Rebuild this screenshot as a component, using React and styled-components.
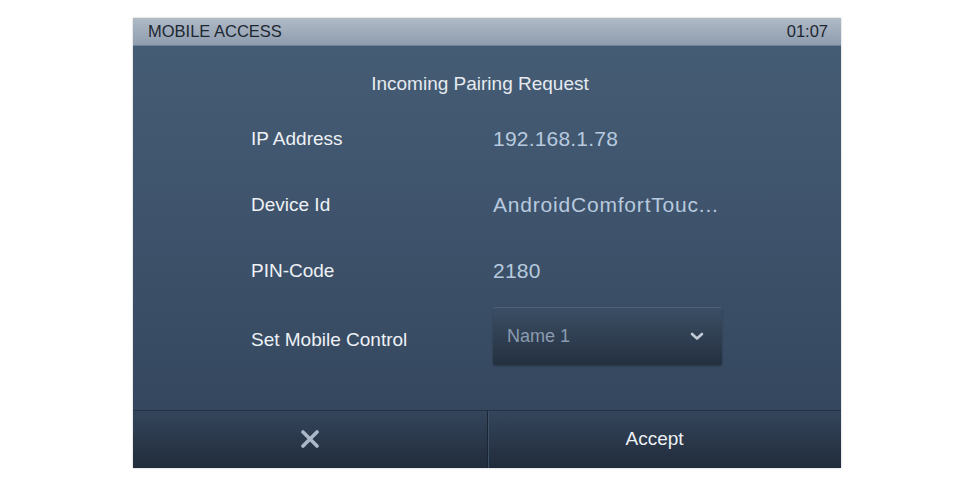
import styled, { createGlobalStyle } from "styled-components";

const GlobalStyle = createGlobalStyle`
  html, body {
    margin: 0;
    padding: 0;
    background: #ffffff;
  }
  body {
    font-family: "Liberation Sans", Arial, sans-serif;
  }
`;

const Page = styled.div`
  width: 974px;
  height: 487px;
  padding: 18px 0 0 133px;
  box-sizing: border-box;
`;

const Panel = styled.div`
  width: 708px;
  height: 450px;
  display: flex;
  flex-direction: column;
  box-shadow: 0 0 2px rgba(0, 0, 0, 0.25);
`;

// Header bar with title and clock
const Header = styled.div`
  height: 27px;
  display: flex;
  align-items: center;
  justify-content: space-between;
  padding: 0 13px 0 15px;
  background: linear-gradient(#b0bac7, #8f9daf);
  color: #1d2731;
  font-size: 16.5px;
  border-bottom: 1px solid #6f8097;
`;

const Body = styled.div`
  flex: 1;
  display: flex;
  flex-direction: column;
  background: linear-gradient(#455c75 0%, #3e536b 50%, #34475e 100%);
`;

const Title = styled.div`
  padding: 27px 14px 0 0;
  line-height: 22px;
  text-align: center;
  color: #e6eaef;
  font-size: 19px;
`;

const Fields = styled.div`
  display: grid;
  grid-template-columns: 242px 1fr;
  grid-auto-rows: 66px;
  padding: 11px 0 0 118px;
`;

const Label = styled.div`
  display: flex;
  align-items: center;
  color: #eef1f5;
  font-size: 19px;
  padding-top: ${(p) => p.$shift || 0}px;
`;

const Value = styled.div`
  display: flex;
  align-items: center;
  color: #b7cadf;
  font-size: 21px;
  letter-spacing: ${(p) => (p.$wide ? "0.8px" : "0.2px")};
`;

const Select = styled.div`
  width: 229px;
  height: 58px;
  box-sizing: border-box;
  display: flex;
  align-items: center;
  justify-content: space-between;
  padding: 0 18px 0 14px;
  margin-top: -2px;
  background: linear-gradient(#3b4e64, #243040);
  border-top: 1px solid #4e6078;
  border-radius: 2px;
  box-shadow: 0 1px 2px rgba(0, 0, 0, 0.3);
  color: #8b9bb0;
  font-size: 18px;
  letter-spacing: 0;
`;

const Footer = styled.div`
  height: 58px;
  display: grid;
  grid-template-columns: 354px 1fr;
  background: linear-gradient(#34455b, #212c3b);
  border-top: 1px solid #253244;
  box-sizing: border-box;
`;

const FooterButton = styled.button`
  border: none;
  background: transparent;
  display: flex;
  align-items: center;
  justify-content: center;
  color: #eef1f5;
  font-family: inherit;
  font-size: 19px;
  padding: 0 ${(p) => (p.$divider ? 20 : 0)}px 2px 0;
  border-left: ${(p) => (p.$divider ? "1px solid #1c2533" : "none")};
  box-shadow: ${(p) => (p.$divider ? "inset 1px 0 0 #3e5066" : "none")};
`;

const CloseIcon = () => (
  <svg width="20" height="18" viewBox="0 0 20 18">
    <path d="M3 2 L17 16 M17 2 L3 16" stroke="#aab8c9" strokeWidth="3.6" strokeLinecap="round" />
  </svg>
);

const Chevron = () => (
  <svg width="14" height="9" viewBox="0 0 14 9">
    <path d="M2 2 L7 6.5 L12 2" stroke="#c3cbd6" strokeWidth="2.6" fill="none" strokeLinecap="round" strokeLinejoin="round" />
  </svg>
);

export default function App() {
  return (
    <Page>
      <GlobalStyle />
      <Panel>
        <Header>
          <span>MOBILE ACCESS</span>
          <span>01:07</span>
        </Header>
        <Body>
          <Title>Incoming Pairing Request</Title>
          <Fields>
            <Label>IP Address</Label>
            <Value>192.168.1.78</Value>
            <Label>Device Id</Label>
            <Value $wide>AndroidComfortTouc...</Value>
            <Label>PIN-Code</Label>
            <Value>2180</Value>
            <Label $shift={6}>Set Mobile Control</Label>
            <Value>
              <Select>
                <span>Name 1</span>
                <Chevron />
              </Select>
            </Value>
          </Fields>
        </Body>
        <Footer>
          <FooterButton>
            <CloseIcon />
          </FooterButton>
          <FooterButton $divider>Accept</FooterButton>
        </Footer>
      </Panel>
    </Page>
  );
}
